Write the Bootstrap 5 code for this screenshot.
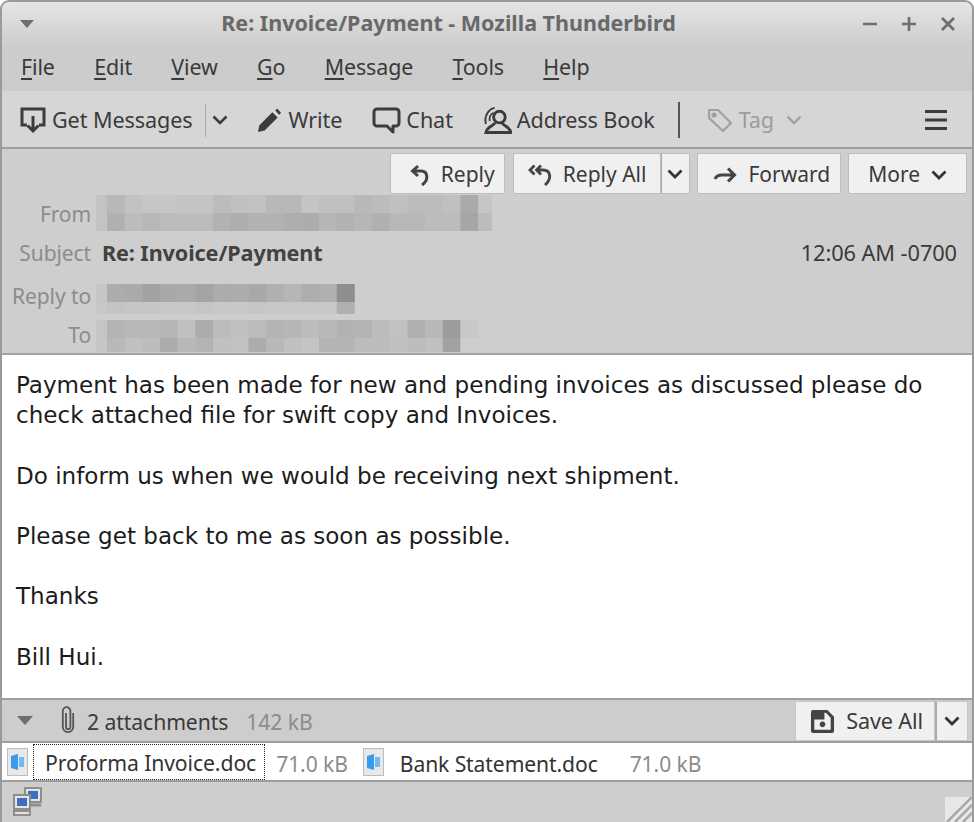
<!DOCTYPE html>
<html lang="en">
<head>
<meta charset="utf-8">
<title>Re: Invoice/Payment - Mozilla Thunderbird</title>
<link href="https://cdn.jsdelivr.net/npm/bootstrap@5.3.0/dist/css/bootstrap.min.css" rel="stylesheet">
<style>
html,body{margin:0;height:822px;overflow:hidden;background:#fff}
body{font-family:"Noto Sans","Open Sans",sans-serif;font-size:21.4px;color:#3a3a3a;letter-spacing:-.1px}
svg{display:block;flex:none}
.tb-window{width:974px;height:822px;border:2px solid #9a9a9a;border-bottom:0;border-radius:9px 9px 0 0;overflow:hidden;display:flex;flex-direction:column;background:#cecece}
.tb-top{height:89px;flex:none;background:linear-gradient(#e5e5e5 0,#cdcdcd 50%,#cbcbcb 100%)}
.tb-title{height:43px;padding:0 16px 0 17px}
.tb-title-text{font-weight:700;font-size:21.5px;color:#696969;letter-spacing:0}
.tb-menu{height:46px;padding:0 0 1px 19px;gap:39.3px}
.tb-menu u{text-underline-offset:3px;text-decoration-thickness:1.5px}
.tb-tools{height:58px;flex:none;background:#d6d6d6;border-bottom:2px solid #9f9f9f;padding:2px 25px 0 17px;font-size:21.6px}
.tb-sep{width:1px;height:33px;background:#a9a9a9}
.tb-sep-dark{width:2px;height:36px;background:#555}
.tb-head{height:206px;flex:none;position:relative;background:#cecece;border-bottom:2px solid #a4a4a4}
.tb-actions{height:45px;gap:7px;padding:4px 5px 0 0}
.tb-btn{height:41px;background:#f0f0f0;border:1px solid #bdbdbd;border-radius:2px;padding:2px 9px 0 19px;color:#3a3a3a;gap:11px;font-size:21px}
.tb-btn-flat{border-radius:2px 0 0 2px;padding:2px 14px 0;margin-left:1px}
.tb-btn-end{border-left:0;border-radius:0 2px 2px 0;padding:0 6px;box-shadow:inset 1px 0 #aaa}
.tb-btn-fwd{padding:2px 10px 0 15px}
.tb-btn-more{padding:2px 19px 0 19px}
.tb-field{position:absolute;left:0;width:89px;text-align:right;color:#8c8c8c;line-height:30px;font-size:21px}
.tb-blur{position:absolute;left:94px}
.tb-subject{position:absolute;left:100px;top:89px;font-weight:700;color:#424242;line-height:30px;font-size:21.6px}
.tb-time{position:absolute;right:15px;top:89px;line-height:30px;color:#3a3a3a;font-size:21.8px}
.tb-body{height:343px;flex:none;background:#fff;padding:15px 14px 0;font-family:"DejaVu Sans",Verdana,sans-serif;font-size:23.05px;line-height:30.2px;color:#1c1c1c;letter-spacing:0;white-space:pre-line;margin:0;overflow:hidden}
.tb-attbar{height:45px;flex:none;background:#cdcdcd;border-top:2px solid #9f9f9f;border-bottom:2px solid #9f9f9f;padding:0 4px 0 15px;font-size:21.2px}
.tb-attbar-label{padding-top:3px}
.tb-muted{color:#8c8c8c}
.tb-save{height:40px;background:#f0f0f0;border:1px solid #c6c6c6;padding:2px 11px 0 14px;gap:11px;color:#3a3a3a;font-size:21.6px}
.tb-save-end{height:40px;background:#f0f0f0;border:1px solid #c6c6c6;border-left:2px solid #aaa;padding:0 7px}
.tb-atts{height:39px;flex:none;background:#fff;padding:0 0 0 5px;border-bottom:2px solid #9f9f9f;font-size:21.1px}
.tb-atts span{padding-top:4px}
.tb-focus{border:1.5px dotted #222;height:36px;margin-left:5px;padding:2px 8px 0 11px;display:flex;align-items:center;color:#333;font-size:21.2px}
.tb-status{flex:1;min-height:0;background:#cecece;position:relative;padding:5px 0 0 11px}
.tb-grip{position:absolute;right:0;bottom:0}
</style>
</head>
<body>
<div class="tb-window">
  <div class="tb-top">
    <div class="tb-title d-flex align-items-center justify-content-between">
      <svg width="16" height="10" viewBox="0 0 16 10"><path d="M1 1h14L8 9z" fill="#6e6e6e"/></svg>
      <div class="tb-title-text">Re: Invoice/Payment - Mozilla Thunderbird</div>
      <div class="d-flex align-items-center" style="gap:23px">
        <svg width="16" height="16" viewBox="0 0 16 16"><path d="M1 8h14" stroke="#6e6e6e" stroke-width="2.6"/></svg>
        <svg width="16" height="16" viewBox="0 0 16 16"><path d="M1 8h14M8 1v14" stroke="#6e6e6e" stroke-width="2.6"/></svg>
        <svg width="16" height="16" viewBox="0 0 16 16"><path d="M2 2l12 12M14 2L2 14" stroke="#6e6e6e" stroke-width="2.8"/></svg>
      </div>
    </div>
    <div class="tb-menu d-flex align-items-center">
      <span><u>F</u>ile</span><span><u>E</u>dit</span><span><u>V</u>iew</span><span><u>G</u>o</span><span><u>M</u>essage</span><span><u>T</u>ools</span><span><u>H</u>elp</span>
    </div>
  </div>
  <div class="tb-tools d-flex align-items-center">
    <svg width="28" height="28" viewBox="0 0 28 28" fill="none" stroke="#3c3c3c" stroke-width="3"><path d="M8 19H3V3h22v16h-5"/><path d="M14 10v15M8.500 19.500l5.500 5.500 5.500-5.500"/></svg>
    <span style="margin-left:5px">Get Messages</span>
    <span class="tb-sep" style="margin-left:13px"></span>
    <svg style="margin-left:6px" width="16" height="10" viewBox="0 0 16 10" fill="none" stroke="#3c3c3c" stroke-width="2.600"><path d="M1.500 1.500L8 8l6.500-6.500"/></svg>
    <svg style="margin-left:29px" width="25" height="25" viewBox="0 0 26 26" fill="#3c3c3c"><path d="M1 25l1.500-7L16 4.500l5.500 5.500L8 23.500zM19 2.500l2-2 4 4.500-2 2z"/></svg>
    <span style="margin-left:6px">Write</span>
    <svg style="margin-left:30px" width="29" height="27" viewBox="0 0 29 27" fill="none" stroke="#3c3c3c" stroke-width="3"><path d="M5 2h19a3 3 0 0 1 3 3v11a3 3 0 0 1-3 3h-3v6l-6-6H5a3 3 0 0 1-3-3V5a3 3 0 0 1 3-3z" stroke-linejoin="round"/></svg>
    <span style="margin-left:5px">Chat</span>
    <svg style="margin-left:30px" width="29" height="30" viewBox="0 0 30 30" fill="none" stroke="#3c3c3c" stroke-width="3"><circle cx="17" cy="12" r="6"/><path d="M12.500 18C11 21 4 22 3 28h26c-1-6-8-7-9.500-10"/><path d="M3 19C1 12 5 4 12 2.500M7 16C6 12.500 8 9 11 7.500" stroke-width="2"/></svg>
    <span style="margin-left:5px">Address Book</span>
    <span class="tb-sep-dark" style="margin-left:23px"></span>
    <svg style="margin-left:27px" width="26" height="26" viewBox="0 0 26 26" fill="none" stroke="#a0a0a0" stroke-width="2.200"><path d="M2 3h9l13 13-8 8L2 11z" stroke-linejoin="round"/><circle cx="7" cy="8" r="1.500" fill="#a0a0a0"/></svg>
    <span style="margin-left:6px;color:#9c9c9c">Tag</span>
    <svg style="margin-left:12px" width="16" height="10" viewBox="0 0 16 10" fill="none" stroke="#a0a0a0" stroke-width="2.400"><path d="M1.500 1.500L8 8l6.500-6.500"/></svg>
    <svg class="ms-auto" width="22" height="22" viewBox="0 0 22 22" fill="#3c3c3c"><path d="M0 1h22v3H0zM0 9.500h22v3H0zM0 18h22v3H0z"/></svg>
  </div>
  <div class="tb-head">
    <div class="tb-actions d-flex justify-content-end">
      <button type="button" class="tb-btn d-flex align-items-center"><svg width="20" height="22" viewBox="0 0 20 22" fill="none" stroke="#444" stroke-width="3"><path d="M8 2L2.500 7 8 12M3 7h8c7 0 8 9 1 14"/></svg>Reply</button>
      <div class="d-flex">
        <button type="button" class="tb-btn tb-btn-flat d-flex align-items-center"><svg width="24" height="22" viewBox="0 0 24 22" fill="none" stroke="#444" stroke-width="2.800"><path d="M6.500 1.500L2 6l4.500 4.500M13 1.500L8.500 6l4.500 4.500M9 6h6c8 0 9 9 2 15"/></svg>Reply All</button>
        <button type="button" class="tb-btn tb-btn-end d-flex align-items-center"><svg width="16" height="10" viewBox="0 0 16 10" fill="none" stroke="#333" stroke-width="2.800"><path d="M1.500 1.500L8 8l6.500-6.500"/></svg></button>
      </div>
      <button type="button" class="tb-btn tb-btn-fwd d-flex align-items-center"><svg width="24" height="16" viewBox="0 0 24 16" fill="none" stroke="#444" stroke-width="3"><path d="M15 1.500L21.500 8 15 14.500M21 8H9C5 8 3 9.500 2 12"/></svg>Forward</button>
      <button type="button" class="tb-btn tb-btn-more d-flex align-items-center">More<svg width="16" height="10" viewBox="0 0 16 10" fill="none" stroke="#333" stroke-width="2.800"><path d="M1.500 1.500L8 8l6.500-6.500"/></svg></button>
    </div>
    <div class="tb-field" style="top:50px">From</div>
    <svg class="tb-blur" data-cells="c3 b8 c2 c6 c6 c4 c4 bc c0 c2 b8 b8 c4 c0 c0 b8 bc c0 bc bc c0 aa c6|c3 b0 bc b8 bc bc bc b2 ae b2 b2 ae ac b6 b2 b6 b0 b8 b8 bc bc a6 bc" style="top:46px" width="396" height="36" aria-hidden="true"></svg>
    <div class="tb-field" style="top:89px">Subject</div>
    <div class="tb-subject">Re: Invoice/Payment</div>
    <div class="tb-time">12:06 AM -0700</div>
    <div class="tb-field" style="top:132px">Reply to</div>
    <svg class="tb-blur" data-cells="c6 ac aa a2 a8 aa a4 ac ac a8 b0 b6 ae b0 8e|c8 c4 c6 c6 c8 c8 c6 c8 c8 c6 c8 c8 c8 c8 b0" style="top:135px" width="259" height="30" aria-hidden="true"></svg>
    <div class="tb-field" style="top:171px">To</div>
    <svg class="tb-blur" data-cells="c6 b4 b8 b8 b6 c0 ac bc c0 bc b4 b6 bc b8 b2 b4 bc c2 b0 b8 9c c8|c6 b8 c0 bc ac b8 b4 c0 c2 ac b8 c0 c4 b4 b4 bc bc c0 bc c0 a2 ce" style="top:171px" width="384" height="32" aria-hidden="true"></svg>
  </div>
  <p class="tb-body">Payment has been made for new and pending invoices as discussed please do
check attached file for swift copy and Invoices.

Do inform us when we would be receiving next shipment.

Please get back to me as soon as possible.

Thanks

Bill Hui.</p>
  <div class="tb-attbar d-flex align-items-center">
    <svg width="16" height="10" viewBox="0 0 16 10"><path d="M0 0h16L8 9z" fill="#6e6e6e"/></svg>
    <svg style="margin-left:26px" width="18" height="29" viewBox="0 0 18 29" fill="none" stroke="#555" stroke-width="1.800"><path d="M7 7v14a2.200 2.200 0 0 0 4.400 0V5a3.800 3.800 0 0 0-7.600 0v16a5.200 5.200 0 0 0 10.400 0V7"/></svg>
    <span class="tb-attbar-label" style="margin-left:10px">2 attachments</span>
    <span class="tb-attbar-label tb-muted" style="margin-left:18px">142 kB</span>
    <div class="ms-auto d-flex">
      <div class="tb-save d-flex align-items-center"><svg width="25" height="25" viewBox="0 0 26 26"><path fill-rule="evenodd" d="M3 1h15l7 7v15a2 2 0 0 1-2 2H3a2 2 0 0 1-2-2V3a2 2 0 0 1 2-2zM4.500 11v10.500h17V9l-5-5H15v7zM13 13a3 3 0 1 0 .01 0z" fill="#444"/></svg>Save All</div>
      <div class="tb-save-end d-flex align-items-center"><svg width="16" height="10" viewBox="0 0 16 10" fill="none" stroke="#333" stroke-width="2.800"><path d="M1.500 1.500L8 8l6.500-6.500"/></svg></div>
    </div>
  </div>
  <div class="tb-atts d-flex align-items-center">
    <svg width="21" height="28" viewBox="0 0 21 28"><rect x=".5" y=".5" width="20" height="27" fill="#e8e8e8" stroke="#bdbdbd"/><path d="M4 8l7-2v16l-7-2z" fill="#3a9bea"/><path d="M12 9h5v10h-5z" fill="#6fbaf0"/></svg>
    <div class="tb-focus">Proforma Invoice.doc</div>
    <span class="tb-muted" style="margin-left:11px">71.0 kB</span>
    <svg style="margin-left:15px" width="21" height="28" viewBox="0 0 21 28"><rect x=".5" y=".5" width="20" height="27" fill="#e8e8e8" stroke="#bdbdbd"/><path d="M4 8l7-2v16l-7-2z" fill="#3a9bea"/><path d="M12 9h5v10h-5z" fill="#6fbaf0"/></svg>
    <span style="margin-left:16px;color:#333">Bank Statement.doc</span>
    <span class="tb-muted" style="margin-left:32px">71.0 kB</span>
  </div>
  <div class="tb-status">
    <svg width="29" height="29" viewBox="0 0 29 29" stroke="#8e8e8e" stroke-width="2"><rect x="12" y="1" width="16" height="14" fill="#e4e4e4"/><rect x="15" y="4" width="10" height="8" fill="#3f6fc0" stroke="none"/><path d="M12 18h16" stroke-width="3"/><rect x="1" y="8" width="16" height="14" fill="#e4e4e4"/><rect x="4" y="11" width="10" height="8" fill="#3f6fc0" stroke="none"/><rect x="1" y="24" width="16" height="4" fill="#e4e4e4"/></svg>
    <svg class="tb-grip" width="27" height="25" viewBox="0 0 27 25"><rect width="27" height="25" fill="#e8e8e8"/><path d="M2 25L27 0M10 25L27 8M18 25l9-9" stroke="#a8a8a8" stroke-width="2.500"/></svg>
  </div>
</div>
<script>
document.querySelectorAll('svg[data-cells]').forEach(function(s){
  var rows=s.dataset.cells.split('|'),h=+s.getAttribute('height'),top=18,out='';
  rows.forEach(function(r,ri){
    r.split(' ').forEach(function(c,i){
      var x=i?11+(i-1)*17.67:0,w=i?17.67:11;
      out+='<rect x="'+x+'" y="'+(ri?top:0)+'" width="'+(w+.4)+'" height="'+(ri?h-top:top)+'" fill="#'+c+c+c.slice(0,2)+'"/>';
    });
  });
  s.innerHTML=out;
});
</script>
<script src="https://cdn.jsdelivr.net/npm/bootstrap@5.3.0/dist/js/bootstrap.bundle.min.js"></script>
</body>
</html>
